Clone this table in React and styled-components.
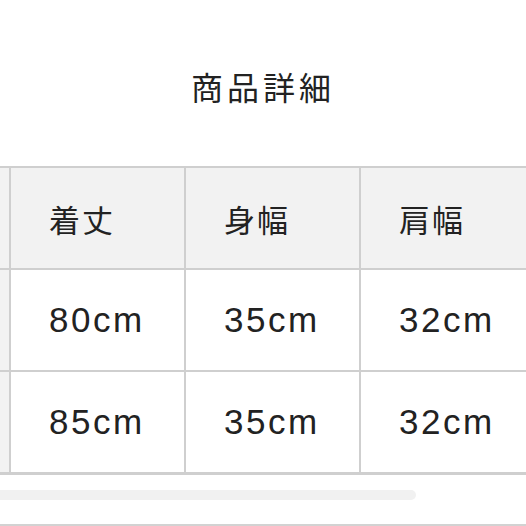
import React from "react";
import styled, { createGlobalStyle } from "styled-components";

const Global = createGlobalStyle`
  html, body { margin: 0; padding: 0; background: #fff; }
  body {
    font-family: "Liberation Sans", "Noto Sans CJK JP", sans-serif;
    color: #222;
    overflow: hidden;
  }
`;

const Page = styled.div`
  width: 526px;
  height: 526px;
  display: flex;
  flex-direction: column;
  overflow: hidden;
  border-bottom: 2px solid #d2d2d2;
  box-sizing: border-box;
`;

const Title = styled.h2`
  margin: 0;
  padding: 70px 0 64px;
  font-size: 32px;
  line-height: 32px;
  font-weight: 400;
  letter-spacing: 4px;
  text-align: center;
  font-family: "Noto Sans CJK JP", sans-serif;
  color: #222;
`;

const TableClip = styled.div`
  width: 526px;
  overflow: hidden;
`;

const Table = styled.table`
  border-collapse: separate;
  border-spacing: 0;
  table-layout: fixed;
  width: 538px;
  border-top: 2px solid #cfcfcf;
`;

const Cell = styled.td`
  box-sizing: border-box;
  height: ${(p) => (p.$last ? 103 : 102)}px;
  padding: 0 0 0 38px;
  border-right: 2px solid #cfcfcf;
  border-bottom: ${(p) => (p.$last ? 3 : 2)}px solid #cfcfcf;
  background: ${(p) => (p.$head ? "#f2f2f2" : "#fff")};
  font-size: ${(p) => (p.$head ? 31 : 35)}px;
  font-family: ${(p) =>
    p.$head
      ? `"Noto Sans CJK JP", sans-serif`
      : `"Liberation Sans", "Noto Sans CJK JP", sans-serif`};
  letter-spacing: ${(p) => (p.$head ? 2 : 2.5)}px;
  font-weight: 400;
  text-align: left;
  vertical-align: middle;
  white-space: nowrap;
  color: #222;
`;

const Stub = styled.td`
  box-sizing: border-box;
  width: 11px;
  padding: 0;
  border-right: 2px solid #cfcfcf;
  border-bottom: ${(p) => (p.$last ? 3 : 2)}px solid #cfcfcf;
  background: #f2f2f2;
`;

const ScrollTrack = styled.div`
  margin-top: 15px;
  height: 10px;
  width: 526px;
`;

const ScrollThumb = styled.div`
  width: 416px;
  height: 10px;
  background: #f1f1f1;
  border-radius: 0 5px 5px 0;
`;

const head = ["着丈", "身幅", "肩幅"];
const rows = [
  ["80cm", "35cm", "32cm"],
  ["85cm", "35cm", "32cm"],
];

export default function App() {
  return (
    <>
      <Global />
      <Page>
        <Title>商品詳細</Title>
        <TableClip>
          <Table>
            <colgroup>
              <col style={{ width: 11 }} />
              <col style={{ width: 175 }} />
              <col style={{ width: 175 }} />
              <col style={{ width: 177 }} />
            </colgroup>
            <tbody>
              <tr>
                <Stub />
                {head.map((h) => (
                  <Cell as="th" $head key={h}>
                    {h}
                  </Cell>
                ))}
              </tr>
              {rows.map((r, i) => (
                <tr key={i}>
                  <Stub $last={i === rows.length - 1} />
                  {r.map((v, j) => (
                    <Cell key={j} $last={i === rows.length - 1}>
                      {v}
                    </Cell>
                  ))}
                </tr>
              ))}
            </tbody>
          </Table>
        </TableClip>
        <ScrollTrack>
          <ScrollThumb />
        </ScrollTrack>
      </Page>
    </>
  );
}
